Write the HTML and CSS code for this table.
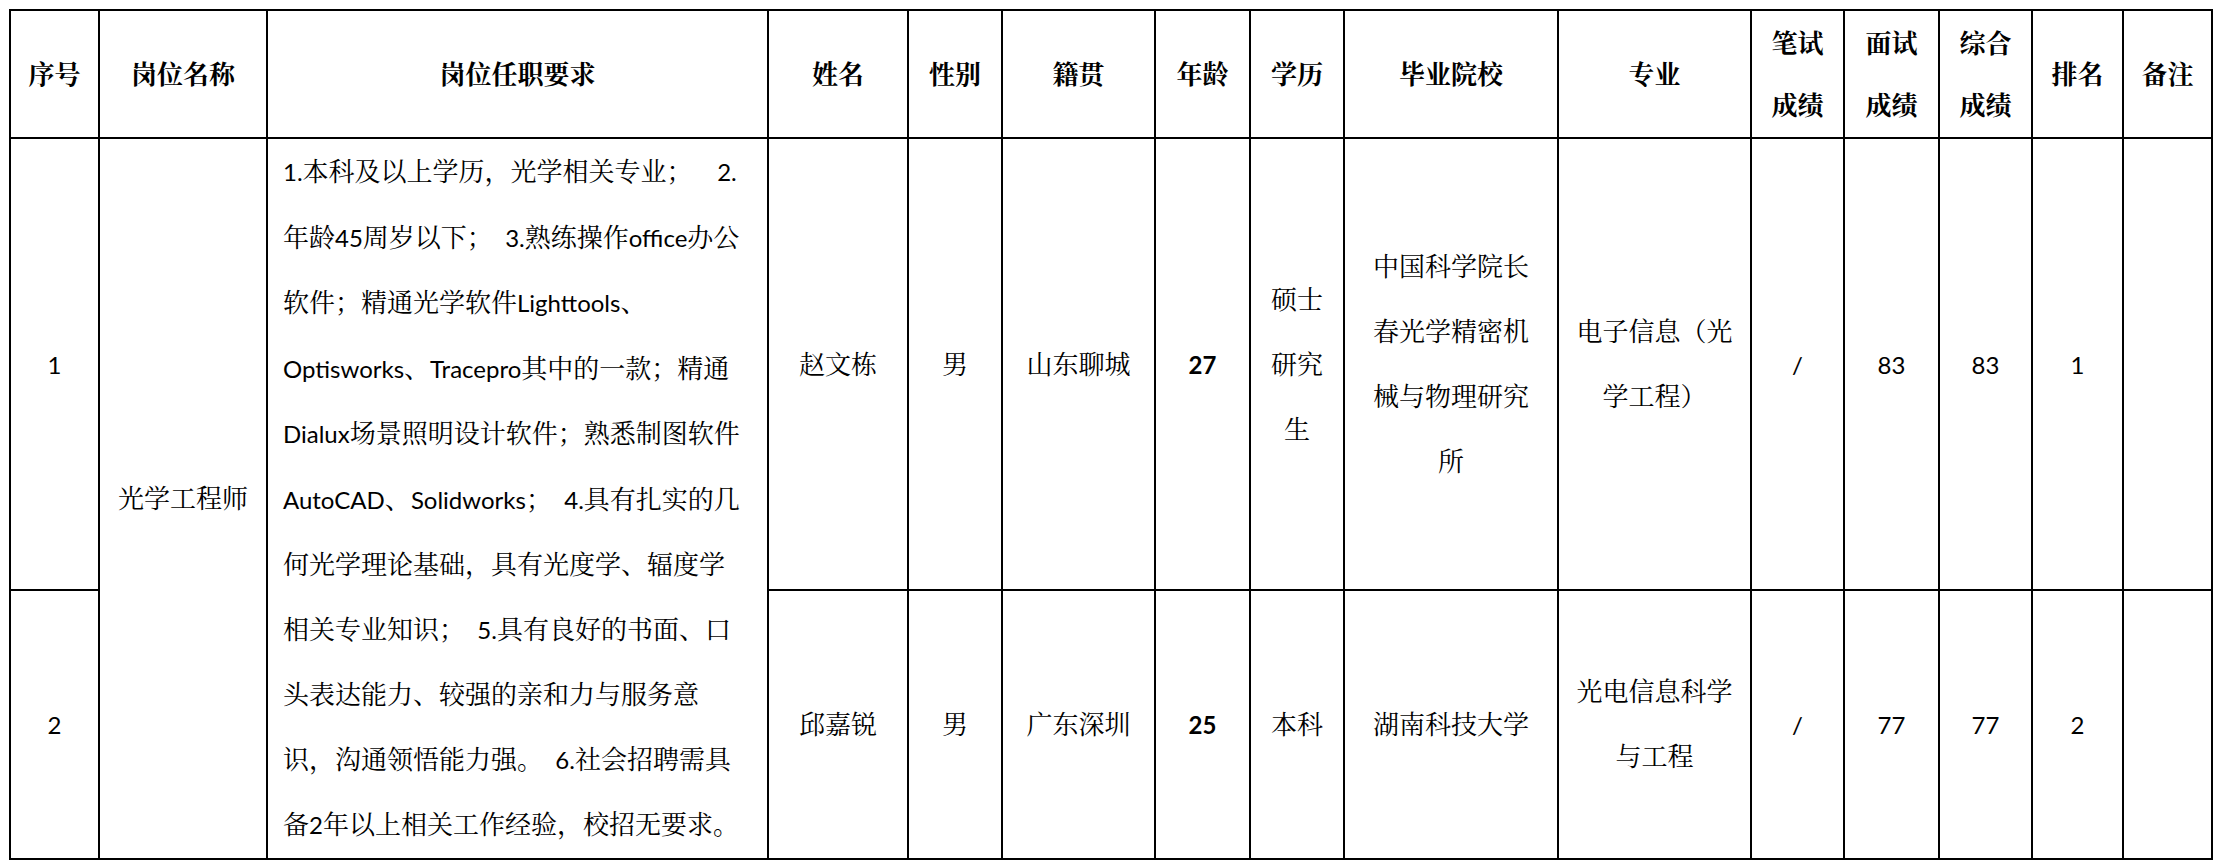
FILE: index.html
```html
<!DOCTYPE html>
<html lang="zh-CN">
<head>
<meta charset="utf-8">
<title>招聘结果公示</title>
<link rel="stylesheet" href="styles.css">
</head>
<body>
<div class="page">
<table class="roster">
<colgroup>
<col class="w-no">
<col class="w-post">
<col class="w-req">
<col class="w-name">
<col class="w-sex">
<col class="w-home">
<col class="w-age">
<col class="w-edu">
<col class="w-school">
<col class="w-major">
<col class="w-score">
<col class="w-score2">
<col class="w-score3">
<col class="w-rank">
<col class="w-note">
</colgroup>
<thead>
<tr class="head">
<th>序号</th>
<th>岗位名称</th>
<th>岗位任职要求</th>
<th>姓名</th>
<th>性别</th>
<th>籍贯</th>
<th>年龄</th>
<th>学历</th>
<th>毕业院校</th>
<th>专业</th>
<th>笔试<br>成绩</th>
<th>面试<br>成绩</th>
<th>综合<br>成绩</th>
<th>排名</th>
<th>备注</th>
</tr>
</thead>
<tbody>
<tr class="row1">
<td class="lat">1</td>
<td rowspan="2">光学工程师</td>
<td rowspan="2" class="req"><span class="lt">1.</span>本科及以上学历，光学相关专业；<span class="lt">&nbsp;&nbsp;&nbsp;&nbsp;2.</span><br>年龄<span class="lt">45</span>周岁以下；<span class="lt">&nbsp;&nbsp;3.</span>熟练操作<span class="lt">office</span>办公<br>软件；精通光学软件<span class="lt">Lighttools</span>、<br><span class="lt">Optisworks</span>、<span class="lt">Tracepro</span>其中的一款；精通<br><span class="lt">Dialux</span>场景照明设计软件；熟悉制图软件<br><span class="lt">AutoCAD</span>、<span class="lt">Solidworks</span>；<span class="lt">&nbsp;&nbsp;4.</span>具有扎实的几<br>何光学理论基础，具有光度学、辐度学<br>相关专业知识；<span class="lt">&nbsp;&nbsp;5.</span>具有良好的书面、口<br>头表达能力、较强的亲和力与服务意<br>识，沟通领悟能力强。<span class="lt">&nbsp;&nbsp;6.</span>社会招聘需具<br>备<span class="lt">2</span>年以上相关工作经验，校招无要求。</td>
<td>赵文栋</td>
<td>男</td>
<td>山东聊城</td>
<td class="lat strong">27</td>
<td>硕士<br>研究<br>生</td>
<td>中国科学院长<br>春光学精密机<br>械与物理研究<br>所</td>
<td>电子信息（光<br>学工程）</td>
<td class="lat">/</td>
<td class="lat">83</td>
<td class="lat">83</td>
<td class="lat">1</td>
<td></td>
</tr>
<tr class="row2">
<td class="lat">2</td>
<td>邱嘉锐</td>
<td>男</td>
<td>广东深圳</td>
<td class="lat strong">25</td>
<td>本科</td>
<td>湖南科技大学</td>
<td>光电信息科学<br>与工程</td>
<td class="lat">/</td>
<td class="lat">77</td>
<td class="lat">77</td>
<td class="lat">2</td>
<td></td>
</tr>
</tbody>
</table>
</div>
</body>
</html>
```

FILE: styles.css
```css
html, body {
  margin: 0;
  padding: 0;
  background: #ffffff;
}

body {
  font-family: Lato, "Noto Serif CJK SC", "Noto Sans CJK SC", sans-serif;
  color: #000000;
}

.page {
  padding: 9px 0 0 9px;
}

.roster {
  border-collapse: collapse;
  table-layout: fixed;
  width: 2204px;
  font-size: 26px;
}

.roster th,
.roster td {
  border: 2px solid #000000;
  padding: 0 4px;
  text-align: center;
  vertical-align: middle;
  line-height: 65px;
  font-weight: 400;
  white-space: nowrap;
}

.roster th {
  font-weight: 700;
  line-height: 62px;
}

.head { height: 128px; }
.row1 { height: 449px; }
.row2 { height: 266px; }

.roster td.req {
  text-align: left;
  vertical-align: top;
  padding: 0 0 0 15px;
  line-height: 64.5px;
}

.lt {
  font-size: 24px;
}

.roster td.lat {
  font-size: 24px;
}

.roster td.strong {
  font-weight: 700;
}

.w-no { width: 89px; }
.w-post { width: 168px; }
.w-req { width: 501px; }
.w-name { width: 140px; }
.w-sex { width: 94px; }
.w-home { width: 153px; }
.w-age { width: 95px; }
.w-edu { width: 94px; }
.w-school { width: 214px; }
.w-major { width: 193px; }
.w-score { width: 93px; }
.w-score2 { width: 95px; }
.w-score3 { width: 93px; }
.w-rank { width: 91px; }
.w-note { width: 89px; }
```
